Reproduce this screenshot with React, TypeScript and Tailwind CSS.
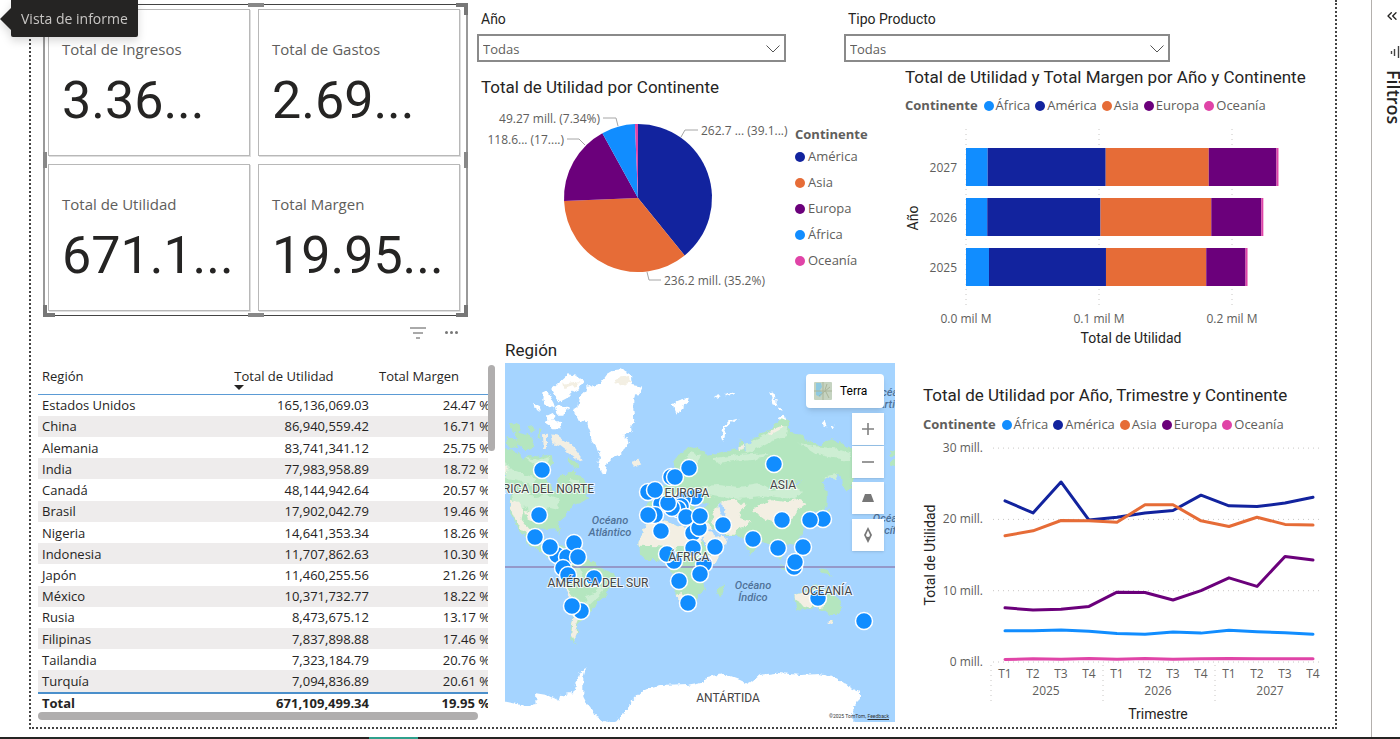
import React from "react";
import { ChevronsLeft } from "lucide-react";

type Continent = "África" | "América" | "Asia" | "Europa" | "Oceanía";

const colors: Record<Continent, string> = {
  África: "#118dff",
  América: "#12239e",
  Asia: "#e66c37",
  Europa: "#6b007b",
  Oceanía: "#e044a7",
};

const continents: Continent[] = ["África", "América", "Asia", "Europa", "Oceanía"];

const cards = [
  { label: "Total de Ingresos", value: "3.36..." },
  { label: "Total de Gastos", value: "2.69..." },
  { label: "Total de Utilidad", value: "671.1..." },
  { label: "Total Margen", value: "19.95..." },
];

const rows = [
  ["Estados Unidos", "165,136,069.03", "24.47 %"],
  ["China", "86,940,559.42", "16.71 %"],
  ["Alemania", "83,741,341.12", "25.75 %"],
  ["India", "77,983,958.89", "18.72 %"],
  ["Canadá", "48,144,942.64", "20.57 %"],
  ["Brasil", "17,902,042.79", "19.46 %"],
  ["Nigeria", "14,641,353.34", "18.26 %"],
  ["Indonesia", "11,707,862.63", "10.30 %"],
  ["Japón", "11,460,255.56", "21.26 %"],
  ["México", "10,371,732.77", "18.22 %"],
  ["Rusia", "8,473,675.12", "13.17 %"],
  ["Filipinas", "7,837,898.88", "17.46 %"],
  ["Tailandia", "7,323,184.79", "20.76 %"],
  ["Turquía", "7,094,836.89", "20.61 %"],
];

const pieData: { name: Continent; value: number }[] = [
  { name: "América", value: 262.7 },
  { name: "Asia", value: 236.2 },
  { name: "Europa", value: 118.6 },
  { name: "África", value: 49.27 },
  { name: "Oceanía", value: 4.4 },
];

// widths are in mil M, same order as `continents`
const barData = [
  { year: 2027, values: [0.0163, 0.0889, 0.0776, 0.051, 0.0015] },
  { year: 2026, values: [0.016, 0.0853, 0.0834, 0.0377, 0.0015] },
  { year: 2025, values: [0.0173, 0.0881, 0.0755, 0.0296, 0.0015] },
];

const lineData: { name: Continent; values: number[] }[] = [
  { name: "África", values: [4.4, 4.4, 4.5, 4.3, 4, 3.9, 4.2, 4.05, 4.45, 4.25, 4.1, 3.9] },
  { name: "América", values: [22.6, 20.9, 25.25, 19.9, 20.3, 20.9, 21.25, 23.4, 21.9, 21.8, 22.3, 23.1] },
  { name: "Asia", values: [17.7, 18.4, 19.85, 19.8, 19.6, 22.05, 22.05, 19.8, 19, 20.3, 19.3, 19.2] },
  { name: "Europa", values: [7.6, 7.3, 7.4, 7.8, 9.8, 9.75, 8.7, 10, 11.8, 10.6, 14.8, 14.3] },
  { name: "Oceanía", values: [0.35, 0.45, 0.4, 0.5, 0.4, 0.5, 0.4, 0.45, 0.5, 0.45, 0.45, 0.45] },
];

const pins = [
  [37, 107], [34, 152], [30, 174], [52, 192], [62, 194], [45, 184], [69, 180], [58, 205], [73, 194], [63, 212],
  [89, 215], [76, 248], [67, 243], [184, 105], [166, 114], [170, 114], [143, 129], [156, 141], [190, 134],
  [178, 136], [176, 143], [173, 146], [167, 145], [150, 127], [163, 140], [150, 152], [143, 152], [181, 154],
  [188, 170], [194, 165], [195, 153], [156, 168], [218, 162], [188, 185], [210, 184], [169, 198], [162, 191],
  [199, 201], [195, 211], [174, 218], [183, 240], [248, 176], [269, 101], [277, 157], [318, 156], [305, 157],
  [273, 185], [298, 184], [289, 204], [290, 199], [313, 235], [359, 258],
];

const Title = ({ children, className = "" }: { children: React.ReactNode; className?: string }) => (
  <h2 className={`font-['Roboto',sans-serif] text-[17px] leading-[22px] whitespace-nowrap text-[#252423] ${className}`}>
    {children}
  </h2>
);

const Dot = ({ name }: { name: Continent }) => (
  <span className="size-2.5 shrink-0 rounded-full" style={{ backgroundColor: colors[name] }} />
);

const Legend = ({ className = "" }: { className?: string }) => (
  <div className={`flex h-5 items-center text-[13px] whitespace-nowrap text-[#605e5c] ${className}`}>
    <span className="font-bold">Continente</span>
    <ul className="ml-1.5 flex gap-[5px]">
      {continents.map((name) => (
        <li key={name} className="flex items-center gap-0.5">
          <Dot name={name} />
          {name}
        </li>
      ))}
    </ul>
  </div>
);

const Slicer = ({ id, label, className }: { id: string; label: string; className: string }) => (
  <div className={className}>
    <label htmlFor={id} className="block pl-1 font-['Roboto',sans-serif] text-sm leading-[18px] text-[#252423]">
      {label}
    </label>
    <div className="relative mt-1.5">
      <select id={id} className="h-7 w-full appearance-none border-2 border-[#8a8a8a] bg-white pt-[3px] pl-1 text-[13px] text-[#605e5c]">
        <option>Todas</option>
      </select>
      <svg className="pointer-events-none absolute top-[11px] right-1.5 h-2 w-3.5" viewBox="0 0 14 8" fill="none" stroke="#555">
        <path d="M.5.5 7 7 13.5.5" />
      </svg>
    </div>
  </div>
);

const Handles = () => (
  <div className="pointer-events-none absolute -inset-0.5">
    <span className="absolute top-0 right-0 h-3 w-3 border-t-4 border-r-4 border-[#777]" />
    <span className="absolute bottom-0 left-0 h-3 w-3 border-b-4 border-l-4 border-[#777]" />
    <span className="absolute right-0 bottom-0 h-3 w-3 border-r-4 border-b-4 border-[#777]" />
    <span className="absolute top-0 left-1/2 h-1 w-4 -translate-x-1/2 bg-[#888]" />
    <span className="absolute bottom-0 left-1/2 h-1 w-4 -translate-x-1/2 bg-[#888]" />
    <span className="absolute top-1/2 left-0 h-4 w-1 -translate-y-1/2 bg-[#888]" />
    <span className="absolute top-1/2 right-0 h-4 w-1 -translate-y-1/2 bg-[#888]" />
  </div>
);

const Cards = () => (
  <section className="relative mt-1 mr-[9px] ml-3 border-x-2 border-y border-x-[#999] border-y-[#444] py-1 pr-1.5 pl-[3px]">
    <div className="grid grid-cols-2 gap-2">
      {cards.map((card) => (
        <div
          key={card.label}
          className="h-[147px] overflow-hidden border border-[#b8b8b8] pt-[29px] pl-[13px] shadow-[1px_1px_0_#dedede]"
        >
          <p className="text-[15px] leading-5 whitespace-nowrap text-[#605e5c]">{card.label}</p>
          <p className="mt-2.5 font-['Roboto',sans-serif] text-[52px] leading-[64px] text-[#252423]">{card.value}</p>
        </div>
      ))}
    </div>
    <Handles />
  </section>
);

const RegionTable = () => (
  <section className="-mr-[18px] ml-[7px]">
    <div className="flex h-[33px] items-center justify-end gap-[19px] pr-[37px]">
      <button aria-label="Filtros del objeto visual">
        <svg className="h-3 w-4" viewBox="0 0 16 12" stroke="#555" fill="none">
          <path d="M0 1h16M3 6h10M6 11h4" />
        </svg>
      </button>
      <button aria-label="Más opciones" className="flex gap-0.5">
        <span className="size-[3px] rounded-full bg-[#777]" />
        <span className="size-[3px] rounded-full bg-[#777]" />
        <span className="size-[3px] rounded-full bg-[#777]" />
      </button>
    </div>
    <div className="mt-3 flex">
      <div className="min-w-0 flex-1 overflow-hidden">
        <table className="h-[351px] w-[calc(100%+2px)] table-fixed border-collapse text-[13px] leading-[18px] text-[#252423]">
          <thead>
            <tr className="h-[33px] border-b border-[#5b9bd5] text-left align-top">
              <th className="w-[43%] px-1 pt-1.5 font-normal">Región</th>
              <th className="relative w-[32%] pt-1.5 pl-0.5 font-normal whitespace-nowrap">
                <button>Total de Utilidad</button>
                <svg className="absolute bottom-1 left-0.5 h-[5px] w-2.5" viewBox="0 0 10 5">
                  <path d="M0 0h10L5 5z" fill="#252423" />
                </svg>
              </th>
              <th className="px-0.5 pt-1.5 font-normal whitespace-nowrap">Total Margen</th>
            </tr>
          </thead>
          <tbody>
            {rows.map(([region, utility, margin]) => (
              <tr key={region} className="even:bg-[#eeecec]">
                <td className="px-1">{region}</td>
                <td className="pr-2 text-right">{utility}</td>
                <td className="text-right">{margin}</td>
              </tr>
            ))}
          </tbody>
          <tfoot>
            <tr className="border-t-2 border-[#4a8fcb] font-bold">
              <td className="px-1">Total</td>
              <td className="pr-2 text-right">671,109,499.34</td>
              <td className="text-right">19.95 %</td>
            </tr>
          </tfoot>
        </table>
        <div className="mr-2.5 h-2 rounded-full bg-[#b0aeae]" />
      </div>
      <div className="mt-1 h-[86px] w-[7px] rounded-full bg-[#b0aeae]" />
    </div>
  </section>
);

const arcPath = (cx: number, cy: number, r: number, from: number, to: number) => {
  const point = (t: number) => `${cx + r * Math.sin(t * 2 * Math.PI)} ${cy - r * Math.cos(t * 2 * Math.PI)}`;
  return `M${cx} ${cy}L${point(from)}A${r} ${r} 0 ${to - from > 0.5 ? 1 : 0} 1 ${point(to)}Z`;
};

const PieChart = () => {
  const total = pieData.reduce((sum, d) => sum + d.value, 0);
  let acc = 0;
  return (
    <div className="flex h-[240px]">
      <svg viewBox="0 0 318 240" className="min-w-0 flex-1" fontSize="12" fill="#605e5c">
        {pieData.map((d) => {
          const from = acc / total;
          acc += d.value;
          return <path key={d.name} d={arcPath(161, 100, 74, from, acc / total)} fill={colors[d.name]} />;
        })}
        <g fill="none" stroke="#a6a6a6">
          <path d="M126 20h13l2 8M90 41h12l6 6M204 39l4-7h13M170 174l2 8h12" />
        </g>
        <text x="123" y="25" textAnchor="end">49.27 mill. (7.34%)</text>
        <text x="87" y="46" textAnchor="end">118.6... (17....)</text>
        <text x="224" y="37">262.7 ... (39.1...)</text>
        <text x="187" y="187">236.2 mill. (35.2%)</text>
      </svg>
      <div className="w-[100px] pt-[27px] text-[13px] text-[#605e5c]">
        <p className="leading-[19px] font-bold">Continente</p>
        <ul>
          {pieData.map((d) => (
            <li key={d.name} className="flex h-[26px] items-center gap-[3px]">
              <Dot name={d.name} />
              {d.name}
            </li>
          ))}
        </ul>
      </div>
    </div>
  );
};

const BarChart = () => (
  <svg viewBox="0 0 440 236" className="w-full" fontSize="12" fill="#605e5c">
    {[0, 1, 2].map((i) => (
      <g key={i}>
        <line x1={71 + i * 133} x2={71 + i * 133} y1="13" y2="192" stroke="#c8c6c4" strokeDasharray="1 4" />
        <text x={71 + i * 133} y="207" textAnchor="middle">{`0.${i} mil M`}</text>
      </g>
    ))}
    {barData.map((bar, row) => {
      let x = 71;
      return (
        <g key={bar.year}>
          <text x="62" y={56 + row * 50} textAnchor="end">{bar.year}</text>
          {bar.values.map((value, i) => {
            const width = value * 1328;
            const rect = (
              <rect key={i} x={x} y={32 + row * 50} width={width} height="38" fill={colors[continents[i]]} />
            );
            x += width;
            return rect;
          })}
        </g>
      );
    })}
    <g fontFamily="Roboto, sans-serif" fontSize="14" fill="#252423" textAnchor="middle">
      <text x="236" y="227">Total de Utilidad</text>
      <text transform="translate(23 102) rotate(-90)">Año</text>
    </g>
  </svg>
);

const LineChart = () => {
  const px = (i: number) => 110 + i * 28;
  const py = (value: number) => 227 - value * 7.13;
  return (
    <svg viewBox="0 0 440 286" className="w-full" fontSize="12" fill="#605e5c">
      {[0, 10, 20, 30].map((tick) => (
        <g key={tick}>
          <line x1="98" x2="425" y1={py(tick)} y2={py(tick)} stroke="#c8c6c4" strokeDasharray="1 4" />
          <text x="88" y={py(tick) + 4} textAnchor="end">{`${tick} mill.`}</text>
        </g>
      ))}
      {[2025, 2026, 2027].map((year, i) => (
        <g key={year} textAnchor="middle">
          <line x1={96 + i * 112} x2={96 + i * 112} y1="230" y2="267" stroke="#c8c6c4" strokeDasharray="1 4" />
          <text x={151 + i * 112} y="260">{year}</text>
        </g>
      ))}
      {lineData[0].values.map((_, i) => (
        <text key={i} x={px(i)} y="243" textAnchor="middle">{`T${(i % 4) + 1}`}</text>
      ))}
      {lineData.map((line) => (
        <polyline
          key={line.name}
          points={line.values.map((value, i) => `${px(i)},${py(value)}`).join(" ")}
          fill="none"
          stroke={colors[line.name]}
          strokeWidth="3"
          strokeLinecap="round"
          strokeLinejoin="round"
        />
      ))}
      <g fontFamily="Roboto, sans-serif" fontSize="14" fill="#252423" textAnchor="middle">
        <text x="263" y="284">Trimestre</text>
        <text transform="translate(40 120) rotate(-90)">Total de Utilidad</text>
      </g>
    </svg>
  );
};

const WorldMap = () => (
  <svg viewBox="0 0 390 359" className="w-full bg-[#a5d4ff]">
    <defs>
      <filter id="coast" x="-5%" y="-5%" width="110%" height="110%">
        <feTurbulence type="fractalNoise" baseFrequency="0.16" numOctaves="3" seed="4" />
        <feDisplacementMap in="SourceGraphic" scale="6" xChannelSelector="R" yChannelSelector="G" />
      </filter>
    </defs>
    <g filter="url(#coast)">
      <g transform="scale(.3333)">
        {/* América del Norte */}
        <g fill="#b4e6bf">
          <path d="M0 256 30 261 55 290 75 276 105 281 140 276 145 300 122 315 112 345 135 362 150 388 160 350 170 335 185 336 205 321 232 345 240 361 265 378 240 396 250 406 225 421 205 426 182 446 185 461 165 476 160 496 168 516 160 511 150 496 120 499 95 501 85 511 80 531 100 551 112 541 126 538 116 556 132 566 150 576 160 591 178 601 152 598 115 576 100 561 70 546 60 521 50 506 40 496 28 471 16 451 14 421 18 391 0 371Z" />
          <path d="M12 180 30 178 45 186 42 206 22 206ZM32 205 60 212 85 225 80 255 60 262 35 240ZM5 222 30 230 40 252 18 256 5 240ZM68 190 85 186 92 200 78 210ZM100 195 108 200 106 232 98 225ZM190 285 212 296 225 312 210 318 195 305Z" />
          <path d="M100 525 125 530 150 548 138 548 118 536ZM155 545 178 548 178 556 158 556Z" />
        </g>
        <path fill="#cdeed3" d="M60 285 100 290 135 282 128 300 95 310ZM0 300 20 320 60 335 95 345 80 370 40 350 0 345ZM20 390 50 380 80 400 120 395 165 410 155 440 110 430 90 460 60 430 30 440ZM195 345 220 350 225 380 200 385Z" />
        <path fill="#f3efe3" d="M15 410 40 420 55 445 50 470 75 500 65 515 45 490 28 465 18 440ZM60 440 82 448 85 475 65 470ZM0 310 10 316 5 328 0 325Z" />
        {/* Ártico */}
        <g fill="#fff">
          <path d="M330 21 350 19 378 36 380 66 412 71 405 86 385 101 385 141 388 171 378 191 380 206 355 216 375 236 360 251 350 271 325 281 310 296 300 331 290 331 280 301 285 281 275 256 265 241 250 201 245 181 220 171 205 141 220 131 225 101 240 86 245 71 290 56 305 36Z" />
          <path d="M138 78 165 55 188 34 215 38 237 54 222 74 200 86 185 106 165 116 148 98ZM116 84 132 92 146 118 150 136 132 132 112 112ZM152 125 188 132 178 158 158 158ZM118 178 136 166 168 184 170 196 145 196ZM88 122 102 130 108 146 92 140ZM120 160 140 150 150 162 128 172Z" />
          <path d="M503 120 525 111 552 104 548 120 528 138 517 158 508 140ZM528 110 545 106 540 118 530 118Z" />
          <path d="M705 165 680 178 664 192 659 220 652 236 648 225 654 196 670 175ZM790 88 805 86 808 108 798 110ZM800 110 815 112 814 128 802 124ZM815 130 832 138 832 146 818 140ZM822 165 840 155 845 180 830 185Z" />
          <path d="M630 100 645 96 650 100 640 104ZM660 96 688 88 690 92 664 100ZM952 180 962 176 968 190 956 188ZM978 182 990 186 986 192 976 190Z" />
        </g>
        <path fill="#f3efe3" d="M330 48 370 38 378 58 345 68 325 60ZM172 62 225 55 215 68 175 78ZM136 214 160 218 188 240 208 256 232 288 222 292 190 268 165 248 142 240ZM114 214 126 212 126 258 116 254ZM380 296 400 290 410 302 396 314 384 310Z" />
        {/* América del Sur */}
        <path fill="#b4e6bf" d="M180 601 205 588 240 591 270 596 290 616 320 631 334 643 325 661 305 696 285 711 265 736 250 751 235 766 225 781 215 791 220 806 210 826 206 840 218 845 200 832 196 801 203 771 205 741 205 711 185 681 175 656 175 636 185 621Z" />
        <path fill="#cdeed3" d="M195 615 225 612 232 635 212 650 196 640ZM240 700 268 690 290 665 300 680 270 710 250 730Z" />
        <path fill="#f3efe3" d="M205 700 215 712 214 745 222 772 214 792 216 810 208 830 199 810 202 780 208 745ZM178 655 190 680 205 700 198 702 182 676Z" />
        {/* África */}
        <path fill="#b4e6bf" d="M430 476 470 470 495 476 520 490 570 493 590 506 592 536 602 552 620 573 646 571 630 601 605 636 595 661 600 681 580 696 570 716 555 735 540 741 530 726 514 696 516 670 504 641 500 611 480 601 460 591 425 591 402 571 400 541 406 516Z" />
        <path fill="#f3efe3" d="M430 476 470 470 495 476 520 490 570 493 590 506 592 536 580 552 545 548 500 556 460 550 402 548 400 541 406 516ZM514 696 530 690 540 712 540 741 530 726ZM612 576 646 571 630 601 612 610Z" />
        <path fill="#b4e6bf" d="M646 671 657 661 658 672 650 703 642 706 636 688Z" />
        {/* Europa y Asia */}
        <path fill="#b4e6bf" d="M505 300 528 268 560 250 595 262 608 278 640 272 660 268 700 256 705 226 716 236 720 266 750 221 785 206 830 166 855 176 855 206 890 221 940 246 980 226 1040 256 1070 262 1068 310 1040 340 1045 360 1028 386 1014 366 1010 336 970 341 950 361 965 388 965 426 955 446 948 462 930 440 915 461 900 481 890 521 860 546 828 543 835 576 826 595 808 560 795 546 765 531 750 561 738 580 720 536 705 516 665 516 630 501 600 480 560 470 545 462 520 462 500 440 480 430 462 452 430 460 418 445 425 420 450 416 440 396 462 378 485 362 510 350 520 330Z" />
        <path fill="#b4e6bf" d="M412 385 425 372 436 385 430 404 414 402ZM1155 268 1170 258 1170 280 1158 282ZM1152 295 1170 290 1170 312 1156 308Z" />
        <path fill="#cdeed3" d="M720 246 760 226 800 206 850 190 845 220 800 236 760 256 725 270ZM620 286 700 276 790 270 775 285 700 292 640 300ZM590 370 640 366 700 372 770 362 800 380 870 372 900 388 860 408 800 400 700 408 640 398 600 392ZM880 240 930 250 990 256 1040 272 1035 292 980 284 930 272ZM955 340 970 338 1000 330 990 350ZM660 470 700 468 720 490 690 498ZM535 290 560 268 590 276 575 300Z" />
        <path fill="#f3efe3" d="M640 425 665 412 700 410 720 430 700 452 712 470 740 478 700 495 690 512 660 512 635 498 620 470ZM770 422 800 412 850 418 870 404 905 420 880 440 865 466 820 482 780 470 752 450 740 440ZM582 478 610 482 632 508 668 526 665 541 635 566 616 566 602 541 586 510ZM790 205 830 188 840 192 795 216ZM700 250 718 246 716 258 702 262Z" />
        <path fill="#a5d4ff" d="M640 425 652 420 655 440 668 460 655 468 645 450ZM560 420 590 414 610 426 590 438 566 434ZM535 335 560 325 558 300 545 310ZM610 500 625 498 650 520 645 526ZM520 470 560 476 592 480 570 492 525 484ZM888 350 895 345 870 370 865 366Z" />
        {/* Oceanía */}
        <path fill="#b4e6bf" d="M868 696 895 686 915 676 935 661 955 681 968 672 976 690 1000 706 1009 731 995 756 975 756 955 741 935 731 900 743 875 741 870 716ZM820 600 850 620 868 632 860 634 832 618ZM850 590 880 588 878 612 858 612ZM886 540 900 560 908 580 896 570ZM940 616 960 618 985 640 970 640 950 630ZM975 775 985 776 980 784ZM945 462 958 448 972 436 970 452 950 470Z" />
        <path fill="#f3efe3" d="M868 696 895 688 935 695 960 710 955 736 935 728 900 736 886 720 872 712ZM970 774 984 774 980 786Z" />
        {/* Antártida */}
        <path fill="#fff" d="M-20 1016 0 1016 65 1029 95 1026 93 991 125 996 145 1006 160 1013 165 996 190 991 205 991 210 961 230 926 243 913 235 941 235 1001 245 1021 275 1061 305 1076 333 1076 365 1041 380 1016 415 981 465 969 545 966 595 956 610 941 655 933 705 951 730 963 765 936 815 929 885 936 945 933 995 946 1035 971 1065 986 1065 1011 1045 1031 1045 1090-20 1090Z" />
      </g>
    </g>
    <path d="M0 204h390" stroke="#8f86b8" strokeWidth="1.5" />
    <g fill="#118dff" stroke="#fff" strokeWidth="1.5">
      {pins.map(([x, y], i) => (
        <circle key={i} cx={x} cy={y} r="8.5" />
      ))}
    </g>
    <g
      fontFamily="Roboto, sans-serif"
      fontSize="12"
      fill="#444"
      stroke="#fff"
      strokeOpacity=".8"
      strokeWidth="2"
      paintOrder="stroke"
      textAnchor="middle"
    >
      <text x="89" y="130" textAnchor="end">AMÉRICA DEL NORTE</text>
      <text x="182" y="134">EUROPA</text>
      <text x="278" y="126">ASIA</text>
      <text x="184" y="198">ÁFRICA</text>
      <text x="93" y="224">AMÉRICA DEL SUR</text>
      <text x="322" y="232">OCEANÍA</text>
      <text x="223" y="339">ANTÁRTIDA</text>
    </g>
    <g fontFamily="Roboto, sans-serif" fontSize="11" fontWeight="500" fontStyle="italic" fill="#4f7299" textAnchor="middle">
      <text x="105" y="161">Océano</text>
      <text x="105" y="173">Atlántico</text>
      <text x="248" y="226">Océano</text>
      <text x="248" y="238">Índico</text>
      <text x="387" y="33">Océano</text>
      <text x="387" y="45">Ártico</text>
      <text x="386" y="159">Océano</text>
      <text x="386" y="171">Pacífico</text>
    </g>
  </svg>
);

const mapButton = "flex size-8 items-center justify-center bg-white shadow";

const MapPanel = () => (
  <div className="relative mt-0.5 ml-7 overflow-hidden">
    <WorldMap />
    <div className="absolute top-[11px] right-[11px] flex flex-col items-end">
      <button className="flex h-[34px] w-[78px] items-center gap-2 rounded bg-white pl-2 font-['Roboto',sans-serif] text-xs text-black shadow-md">
        <svg className="size-[18px]" viewBox="0 0 18 18">
          <rect width="18" height="18" rx="1" fill="#c5d3c0" />
          <path d="M2 1h5l1 4-2 3 3 3-3 4-4-2z" fill="#8fc9e0" />
          <path d="M9 0v18M0 9h18M13 2l-2 6 4 8M5 14l11-9" stroke="#aab59a" fill="none" />
        </svg>
        Terra
      </button>
      <button aria-label="Acercar" className={`${mapButton} mt-[5px]`}>
        <svg className="size-3" viewBox="0 0 12 12" stroke="#808080" strokeWidth="1.6">
          <path d="M6 0v12M0 6h12" />
        </svg>
      </button>
      <button aria-label="Alejar" className={`${mapButton} mt-px`}>
        <svg className="size-3" viewBox="0 0 12 12" stroke="#808080" strokeWidth="1.6">
          <path d="M0 6h12" />
        </svg>
      </button>
      <button aria-label="Inclinación" className={`${mapButton} mt-1`}>
        <svg className="h-2 w-3" viewBox="0 0 12 8" fill="#777">
          <path d="M3 0h6l3 8H0z" />
        </svg>
      </button>
      <button aria-label="Rotación" className={`${mapButton} mt-[5px]`}>
        <svg className="h-4 w-2" viewBox="0 0 8 16" fill="#777">
          <path fillRule="evenodd" d="M4 0 8 8l-4 8-4-8zM4 3.500 2 8a2 2 0 1 0 4 0z" />
        </svg>
      </button>
    </div>
    <p className="absolute right-1.5 bottom-0.5 font-['Roboto',sans-serif] text-[5px] leading-2 text-[#333]">
      ©2025 TomTom, <a href="#feedback" className="underline">Feedback</a>
    </p>
  </div>
);

const FilterPane = () => (
  <aside className="flex w-[29px] shrink-0 flex-col items-start overflow-hidden border-l border-[#b3b0ad] pt-2 pl-3 text-[#252423]">
    <button aria-label="Expandir">
      <ChevronsLeft className="size-4" strokeWidth={2} />
    </button>
    <svg className="mt-[22px] ml-1.5 h-3 w-4 shrink-0" viewBox="0 0 16 12" stroke="#444" strokeWidth="1.4">
      <path d="M1.500 5v3M4.500 3v7M8.500 0v12" />
    </svg>
    <h2 className="mt-3 text-lg leading-5 font-semibold [writing-mode:vertical-rl]">Filtros</h2>
  </aside>
);

export default function App() {
  return (
    <div className="relative flex min-h-screen flex-col overflow-hidden bg-white font-['Open_Sans','Noto_Sans',sans-serif]">
      <div className="flex flex-1">
        <main className="mr-[34px] mb-2 ml-[29px] flex min-w-0 flex-1 border-2 border-t-0 border-dotted border-[#444] pb-1">
          <div className="min-w-0 flex-[446]">
            <Cards />
            <RegionTable />
          </div>
          <div className="min-w-0 flex-[858]">
            <div className="flex pt-2.5">
              <Slicer id="anio" label="Año" className="mr-[58px] w-[36%]" />
              <Slicer id="tipo" label="Tipo Producto" className="w-[38%]" />
            </div>
            <div className="flex">
              <div className="min-w-0 flex-[418] pt-[14px]">
                <Title className="pl-1">Total de Utilidad por Continente</Title>
                <PieChart />
                <Title className="mt-px pl-7">Región</Title>
                <MapPanel />
              </div>
              <div className="min-w-0 flex-[440] pt-1">
                <Title className="pl-2.5">Total de Utilidad y Total Margen por Año y Continente</Title>
                <Legend className="mt-2 pl-2.5" />
                <BarChart />
                <Title className="mt-8 pl-7">Total de Utilidad por Año, Trimestre y Continente</Title>
                <Legend className="mt-[9px] pl-7" />
                <LineChart />
              </div>
            </div>
          </div>
        </main>
        <FilterPane />
      </div>
      <footer className="flex h-0.5 bg-[#252423]">
        <span className="ml-[369px] w-[49px] bg-[#2fa08c]" />
      </footer>
      <div role="tooltip" className="absolute top-0 left-0 flex items-center drop-shadow-lg">
        <svg className="h-[22px] w-[11px]" viewBox="0 0 11 22">
          <path d="M11 0 0 11l11 11z" fill="#252423" />
        </svg>
        <span className="rounded-b-xs bg-[#252423] px-2.5 py-2 text-sm leading-[21px] text-[#c8c6c4]">Vista de informe</span>
      </div>
    </div>
  );
}
